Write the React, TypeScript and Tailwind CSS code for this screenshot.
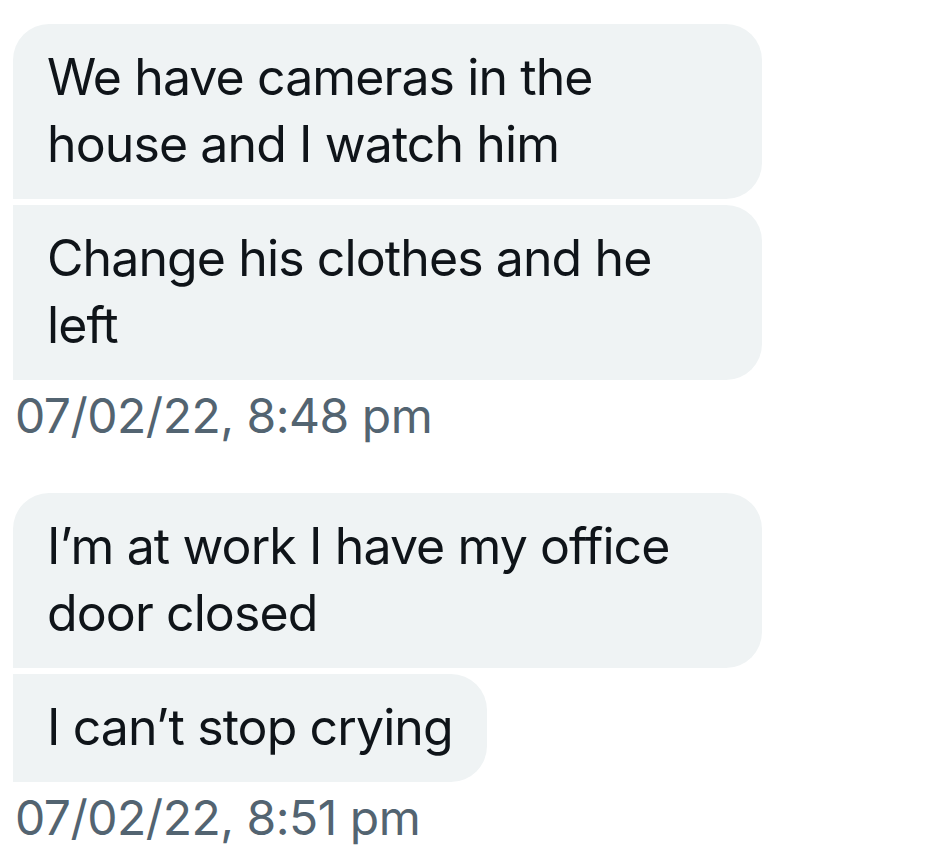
import React from "react";

type Group = {
  messages: string[];
  time: string;
};

const groups: Group[] = [
  {
    messages: ["We have cameras in the house and I watch him", "Change his clothes and he left"],
    time: "07/02/22, 8:48 pm",
  },
  {
    messages: ["I’m at work I have my office door closed", "I can’t stop crying"],
    time: "07/02/22, 8:51 pm",
  },
];

const Bubble = ({ text, first }: { text: string; first: boolean }) => (
  <div
    className={`w-fit max-w-[749px] bg-[#eff3f4] px-[34px] pb-[21px] pt-[20px] text-[50px] leading-[67px] tracking-[-0.9px] text-[#0f1419] rounded-r-[36px] ${
      first ? "rounded-tl-[36px]" : ""
    }`}
  >
    {text}
  </div>
);

const App = () => {
  return (
    <main
      className="min-h-screen bg-white pl-[13px] pt-[24px]"
      style={{ fontFamily: "Inter, 'Liberation Sans', sans-serif" }}
    >
      <div className="flex flex-col gap-[45px]">
        {groups.map((g) => (
          <section key={g.time} className="flex flex-col">
            <div className="flex flex-col gap-[6px]">
              {g.messages.map((m, i) => (
                <Bubble key={m} text={m} first={i === 0} />
              ))}
            </div>
            <div className="pl-[2px] pt-[4px] text-[48px] leading-[64px] tracking-[-0.5px] text-[#536471]">
              {g.time}
            </div>
          </section>
        ))}
      </div>
    </main>
  );
};

export default App;
